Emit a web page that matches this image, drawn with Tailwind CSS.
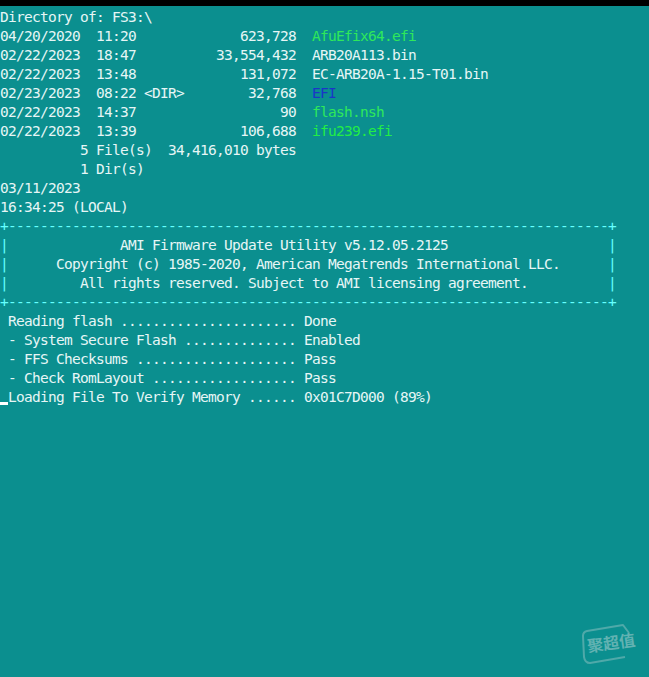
<!DOCTYPE html>
<html lang="en">
<head>
  <meta charset="UTF-8">
  <title>AMI Firmware Update Utility</title>
  <script src="https://cdn.jsdelivr.net/npm/@tailwindcss/browser@4"></script>
</head>
<body class="bg-[#0b8f8f] overflow-hidden">
  <div class="relative h-[677px] w-[649px] overflow-hidden">
    <div class="h-[6px] bg-black"></div>
    <!-- directory listing -->
    <div class="pt-[2px] font-['DejaVu_Sans_Mono',monospace] text-[14.5px] tracking-[-0.73px] leading-[19px] text-[#e6f6f6] *:whitespace-pre">
      <div>Directory of: FS3:\</div>
      <div>04/20/2020  11:20             623,728  <span class="text-[#2fe85a]">AfuEfix64.efi</span></div>
      <div>02/22/2023  18:47          33,554,432  ARB20A113.bin</div>
      <div>02/22/2023  13:48             131,072  EC-ARB20A-1.15-T01.bin</div>
      <div>02/23/2023  08:22 &lt;DIR&gt;        32,768  <span class="text-[#1a35c8]">EFI</span></div>
      <div>02/22/2023  14:37                  90  <span class="text-[#2fe85a]">flash.nsh</span></div>
      <div>02/22/2023  13:39             106,688  <span class="text-[#22ee44]">ifu239.efi</span></div>
      <div>          5 File(s)  34,416,010 bytes</div>
      <div>          1 Dir(s)</div>
      <div>03/11/2023</div>
      <div>16:34:25 (LOCAL)</div>
      <!-- banner -->
      <div class="text-[#66ffff]">+---------------------------------------------------------------------------+</div>
      <div><span class="text-[#66ffff]">|</span>              AMI Firmware Update Utility v5.12.05.2125                   <span class="text-[#66ffff]"> |</span></div>
      <div><span class="text-[#66ffff]">|</span>      Copyright (c) 1985-2020, American Megatrends International LLC.     <span class="text-[#66ffff]"> |</span></div>
      <div><span class="text-[#66ffff]">|</span>         All rights reserved. Subject to AMI licensing agreement.         <span class="text-[#66ffff]"> |</span></div>
      <div class="text-[#66ffff]">+---------------------------------------------------------------------------+</div>
      <!-- flash progress -->
      <div> Reading flash ...................... Done</div>
      <div> - System Secure Flash .............. Enabled</div>
      <div> - FFS Checksums .................... Pass</div>
      <div> - Check RomLayout .................. Pass</div>
      <div class="relative"> Loading File To Verify Memory ...... 0x01C7D000 (89%)<span class="absolute left-0 top-[14px] h-[3px] w-[8px] bg-white"></span></div>
    </div>
    <!-- watermark -->
    <svg class="absolute left-[580px] top-[622px]" width="56" height="44" viewBox="580 622 56 44" fill="none">
      <path d="M629 633 L623 625 L587 631 Q583 632 583 636 L584 657 Q585 663 590 663 L625 657" stroke="#4fa9a9" stroke-width="2" stroke-linejoin="round"/>
    </svg>
    <div class="absolute left-[587px] top-[630px] -rotate-[8deg] font-['Noto_Sans_CJK_SC',sans-serif] text-[16px] leading-[24px] font-bold text-[#62b2b2]">聚超值</div>
  </div>
</body>
</html>
